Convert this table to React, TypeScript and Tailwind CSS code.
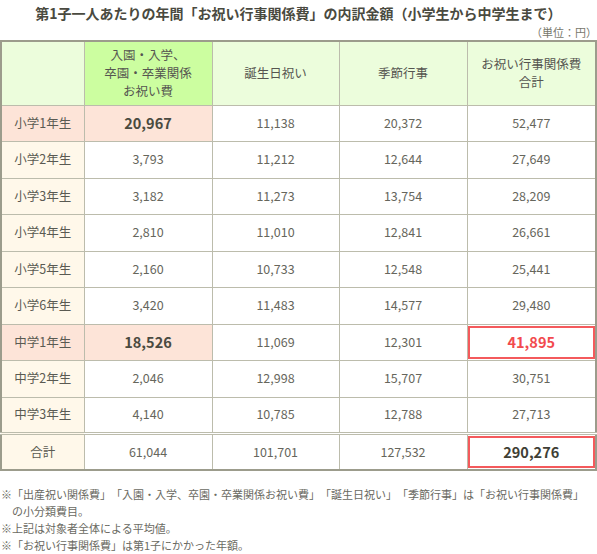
import React from "react";

type Row = {
  label: string;
  vals: [string, string, string, string];
  hl?: boolean;
  redTotal?: boolean;
  total?: boolean;
};

const rows: Row[] = [
  { label: "小学1年生", vals: ["20,967", "11,138", "20,372", "52,477"], hl: true },
  { label: "小学2年生", vals: ["3,793", "11,212", "12,644", "27,649"] },
  { label: "小学3年生", vals: ["3,182", "11,273", "13,754", "28,209"] },
  { label: "小学4年生", vals: ["2,810", "11,010", "12,841", "26,661"] },
  { label: "小学5年生", vals: ["2,160", "10,733", "12,548", "25,441"] },
  { label: "小学6年生", vals: ["3,420", "11,483", "14,577", "29,480"] },
  { label: "中学1年生", vals: ["18,526", "11,069", "12,301", "41,895"], hl: true, redTotal: true },
  { label: "中学2年生", vals: ["2,046", "12,998", "15,707", "30,751"] },
  { label: "中学3年生", vals: ["4,140", "10,785", "12,788", "27,713"] },
  { label: "合計", vals: ["61,044", "101,701", "127,532", "290,276"], total: true },
];

const font = { fontFamily: '"Noto Sans CJK JP", "Noto Sans", sans-serif' };

export default function App() {
  return (
    <div className="w-[597px] h-[554px] overflow-hidden bg-white text-[#66665c] [text-spacing-trim:space-all]" style={font}>
      <div className="h-[25px] flex items-center justify-center">
        <h1 className="text-[14px] font-bold leading-[18px] text-[#4a4a40]">
          第1子一人あたりの年間「お祝い行事関係費」の内訳金額（小学生から中学生まで）
        </h1>
      </div>
      <div className="h-[15px] flex items-start justify-end">
        <span className="text-[11px] leading-[14px] text-[#77776c]">（単位：円）</span>
      </div>
      <table className="w-[595px] table-fixed border-collapse border-2 border-[#9c9c8c] text-[12.5px]">
        <colgroup>
          <col className="w-[83px]" />
          <col className="w-[128px]" />
          <col className="w-[127px]" />
          <col className="w-[128px]" />
          <col className="w-[129px]" />
        </colgroup>
        <thead>
          <tr className="h-[64px] leading-[18px] text-[#555550]">
            <th className="border border-[#bcbcac] bg-[#ecfddc] font-normal"></th>
            <th className="border border-[#bcbcac] bg-[#ccfea0] font-normal">
              入園・入学、
              <br />
              卒園・卒業関係
              <br />
              お祝い費
            </th>
            <th className="border border-[#bcbcac] bg-[#ecfddc] font-normal">誕生日祝い</th>
            <th className="border border-[#bcbcac] bg-[#ecfddc] font-normal">季節行事</th>
            <th className="border border-[#bcbcac] bg-[#ecfddc] font-normal">
              お祝い行事関係費
              <br />
              合計
            </th>
          </tr>
        </thead>
        <tbody>
          {rows.map((r) => (
            <tr
              key={r.label}
              className={`h-[36.5px] ${r.total ? "border-t-[3px] border-double border-[#aaa99a]" : ""}`}
            >
              <td
                className={`border border-[#bcbcac] text-center text-[#5a5a52] ${
                  r.hl ? "bg-[#fde4d8]" : "bg-[#fff8ea]"
                } ${r.total ? "border-t-[3px] border-double" : ""}`}
              >
                {r.label}
              </td>
              {r.vals.map((v, i) => {
                const first = i === 0;
                const last = i === 3;
                const red = last && r.redTotal;
                const boxed = last && (r.redTotal || r.total);
                return (
                  <td
                    key={i}
                    className={`relative border border-[#bcbcac] text-center ${
                      first && r.hl ? "bg-[#fde4d8] font-bold text-[14.5px] text-[#4a4a40]" : ""
                    } ${red ? "font-bold text-[14.5px] text-[#f24a4e]" : ""} ${
                      last && r.total ? "font-bold text-[14.5px] text-[#3f3f36]" : ""
                    } ${r.total ? "border-t-[3px] border-double" : ""}`}
                  >
                    {v}
                    {boxed && (
                      <span className="pointer-events-none absolute inset-x-[0px] top-[1px] bottom-[1px] border-[2.5px] border-[#f45a5c]" />
                    )}
                  </td>
                );
              })}
            </tr>
          ))}
        </tbody>
      </table>
      <div className="mt-[15px] text-[11px] leading-[17px] text-[#6a6a62]">
        <p className="pl-[1px]">
          ※「出産祝い関係費」「入園・入学、卒園・卒業関係お祝い費」「誕生日祝い」「季節行事」は「お祝い行事関係費」
        </p>
        <p className="pl-[12px]">の小分類費目。</p>
        <p className="pl-[1px]">※上記は対象者全体による平均値。</p>
        <p className="pl-[1px]">※「お祝い行事関係費」は第1子にかかった年額。</p>
      </div>
    </div>
  );
}
